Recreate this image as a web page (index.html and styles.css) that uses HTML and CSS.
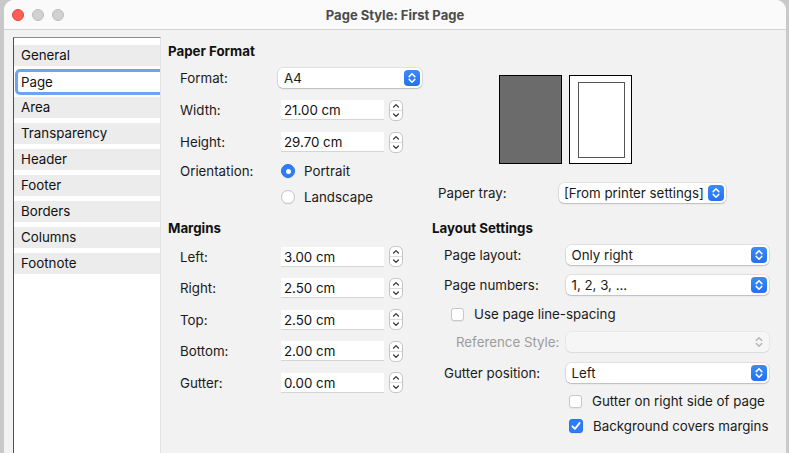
FILE: index.html
```html
<!DOCTYPE html>
<html>
<head>
<meta charset="utf-8">
<title>Page Style: First Page</title>
<link rel="stylesheet" href="styles.css">
</head>
<body>
<div class="window">
  <div class="titlebar">
    <div class="lights"><span class="light red"></span><span class="light"></span><span class="light"></span></div>
    <div class="title">Page Style: First Page</div>
    <div></div>
  </div>
  <div class="main">
    <ul class="tabs">
      <li>General</li>
      <li class="sel">Page</li>
      <li>Area</li>
      <li>Transparency</li>
      <li>Header</li>
      <li>Footer</li>
      <li>Borders</li>
      <li>Columns</li>
      <li>Footnote</li>
    </ul>
    <div class="panel">
      <div class="section top">
        <div class="group left">
          <h2>Paper Format</h2>
          <div class="row r-format"><span class="lbl">Format:</span>
            <div class="select sel-format"><span class="val">A4</span><span class="sbtn"><svg width="16" height="16" viewBox="0 0 16 16"><path d="M5.2 6.6 L8 3.8 L10.8 6.6 M5.2 9.4 L8 12.2 L10.8 9.4" fill="none" stroke="#fff" stroke-width="1.5" stroke-linecap="round" stroke-linejoin="round"/></svg></span></div>
          </div>
          <div class="row r-num"><span class="lbl">Width:</span>
            <span class="input">21.00 cm</span>
            <svg class="spin" width="14" height="21" viewBox="0 0 14 21"><rect x="0.5" y="0.5" width="13" height="20" rx="5" fill="#fff" stroke="#c2c2c2"/><line x1="1" y1="10.5" x2="13" y2="10.5" stroke="#dcdcdc"/><path d="M4.6 7 L7 4.6 L9.4 7 M4.6 14 L7 16.4 L9.4 14" fill="none" stroke="#3a3a3a" stroke-width="1.3" stroke-linecap="round" stroke-linejoin="round"/></svg>
          </div>
          <div class="row r-num"><span class="lbl">Height:</span>
            <span class="input">29.70 cm</span>
            <svg class="spin" width="14" height="21" viewBox="0 0 14 21"><rect x="0.5" y="0.5" width="13" height="20" rx="5" fill="#fff" stroke="#c2c2c2"/><line x1="1" y1="10.5" x2="13" y2="10.5" stroke="#dcdcdc"/><path d="M4.6 7 L7 4.6 L9.4 7 M4.6 14 L7 16.4 L9.4 14" fill="none" stroke="#3a3a3a" stroke-width="1.3" stroke-linecap="round" stroke-linejoin="round"/></svg>
          </div>
          <div class="row r-orient"><span class="lbl">Orientation:</span>
            <span class="radio on"></span><span class="rtext">Portrait</span>
          </div>
          <div class="row r-land"><span class="lbl"></span>
            <span class="radio"></span><span class="rtext">Landscape</span>
          </div>
        </div>
        <div class="group right">
          <div class="preview">
            <div class="pg dark"></div>
            <div class="pg white"><div class="inner"></div></div>
          </div>
          <div class="row r-tray"><span class="lbl">Paper tray:</span>
            <div class="select sel-tray"><span class="val">[From printer settings]</span><span class="sbtn"><svg width="16" height="16" viewBox="0 0 16 16"><path d="M5.2 6.6 L8 3.8 L10.8 6.6 M5.2 9.4 L8 12.2 L10.8 9.4" fill="none" stroke="#fff" stroke-width="1.5" stroke-linecap="round" stroke-linejoin="round"/></svg></span></div>
          </div>
        </div>
      </div>
      <div class="section bottom">
        <div class="group left">
          <h2>Margins</h2>
          <div class="mrows">
            <div class="row r-m"><span class="lbl">Left:</span><span class="input">3.00 cm</span>
              <svg class="spin" width="14" height="21" viewBox="0 0 14 21"><rect x="0.5" y="0.5" width="13" height="20" rx="5" fill="#fff" stroke="#c2c2c2"/><line x1="1" y1="10.5" x2="13" y2="10.5" stroke="#dcdcdc"/><path d="M4.6 7 L7 4.6 L9.4 7 M4.6 14 L7 16.4 L9.4 14" fill="none" stroke="#3a3a3a" stroke-width="1.3" stroke-linecap="round" stroke-linejoin="round"/></svg></div>
            <div class="row r-m"><span class="lbl">Right:</span><span class="input">2.50 cm</span>
              <svg class="spin" width="14" height="21" viewBox="0 0 14 21"><rect x="0.5" y="0.5" width="13" height="20" rx="5" fill="#fff" stroke="#c2c2c2"/><line x1="1" y1="10.5" x2="13" y2="10.5" stroke="#dcdcdc"/><path d="M4.6 7 L7 4.6 L9.4 7 M4.6 14 L7 16.4 L9.4 14" fill="none" stroke="#3a3a3a" stroke-width="1.3" stroke-linecap="round" stroke-linejoin="round"/></svg></div>
            <div class="row r-m"><span class="lbl">Top:</span><span class="input">2.50 cm</span>
              <svg class="spin" width="14" height="21" viewBox="0 0 14 21"><rect x="0.5" y="0.5" width="13" height="20" rx="5" fill="#fff" stroke="#c2c2c2"/><line x1="1" y1="10.5" x2="13" y2="10.5" stroke="#dcdcdc"/><path d="M4.6 7 L7 4.6 L9.4 7 M4.6 14 L7 16.4 L9.4 14" fill="none" stroke="#3a3a3a" stroke-width="1.3" stroke-linecap="round" stroke-linejoin="round"/></svg></div>
            <div class="row r-m"><span class="lbl">Bottom:</span><span class="input">2.00 cm</span>
              <svg class="spin" width="14" height="21" viewBox="0 0 14 21"><rect x="0.5" y="0.5" width="13" height="20" rx="5" fill="#fff" stroke="#c2c2c2"/><line x1="1" y1="10.5" x2="13" y2="10.5" stroke="#dcdcdc"/><path d="M4.6 7 L7 4.6 L9.4 7 M4.6 14 L7 16.4 L9.4 14" fill="none" stroke="#3a3a3a" stroke-width="1.3" stroke-linecap="round" stroke-linejoin="round"/></svg></div>
            <div class="row r-m"><span class="lbl">Gutter:</span><span class="input">0.00 cm</span>
              <svg class="spin" width="14" height="21" viewBox="0 0 14 21"><rect x="0.5" y="0.5" width="13" height="20" rx="5" fill="#fff" stroke="#c2c2c2"/><line x1="1" y1="10.5" x2="13" y2="10.5" stroke="#dcdcdc"/><path d="M4.6 7 L7 4.6 L9.4 7 M4.6 14 L7 16.4 L9.4 14" fill="none" stroke="#3a3a3a" stroke-width="1.3" stroke-linecap="round" stroke-linejoin="round"/></svg></div>
          </div>
        </div>
        <div class="group right layout">
          <h2>Layout Settings</h2>
          <div class="row l1"><span class="lbl2">Page layout:</span>
            <div class="select sel-wide"><span class="val">Only right</span><span class="sbtn"><svg width="16" height="16" viewBox="0 0 16 16"><path d="M5.2 6.6 L8 3.8 L10.8 6.6 M5.2 9.4 L8 12.2 L10.8 9.4" fill="none" stroke="#fff" stroke-width="1.5" stroke-linecap="round" stroke-linejoin="round"/></svg></span></div>
          </div>
          <div class="row l2"><span class="lbl2">Page numbers:</span>
            <div class="select sel-wide"><span class="val">1, 2, 3, ...</span><span class="sbtn"><svg width="16" height="16" viewBox="0 0 16 16"><path d="M5.2 6.6 L8 3.8 L10.8 6.6 M5.2 9.4 L8 12.2 L10.8 9.4" fill="none" stroke="#fff" stroke-width="1.5" stroke-linecap="round" stroke-linejoin="round"/></svg></span></div>
          </div>
          <div class="row l3"><span class="check"></span><span class="ctext">Use page line-spacing</span></div>
          <div class="row l4"><span class="lbl3">Reference Style:</span>
            <div class="select sel-wide disabled"><span class="val"></span><span class="sbtn"><svg width="16" height="16" viewBox="0 0 16 16"><path d="M5.2 6.6 L8 3.8 L10.8 6.6 M5.2 9.4 L8 12.2 L10.8 9.4" fill="none" stroke="#b5b5b5" stroke-width="1.4" stroke-linecap="round" stroke-linejoin="round"/></svg></span></div>
          </div>
          <div class="row l5"><span class="lbl2">Gutter position:</span>
            <div class="select sel-wide"><span class="val">Left</span><span class="sbtn"><svg width="16" height="16" viewBox="0 0 16 16"><path d="M5.2 6.6 L8 3.8 L10.8 6.6 M5.2 9.4 L8 12.2 L10.8 9.4" fill="none" stroke="#fff" stroke-width="1.5" stroke-linecap="round" stroke-linejoin="round"/></svg></span></div>
          </div>
          <div class="row l6"><span class="check"></span><span class="ctext">Gutter on right side of page</span></div>
          <div class="row l7"><span class="check on"><svg width="14" height="14" viewBox="0 0 14 14"><path d="M3.4 7.3 L6 9.9 L10.7 3.9" fill="none" stroke="#fff" stroke-width="1.8" stroke-linecap="round" stroke-linejoin="round"/></svg></span><span class="ctext">Background covers margins</span></div>
        </div>
      </div>
    </div>
  </div>
</div>
</body>
</html>
```
FILE: styles.css
```css
* { box-sizing: border-box; }
html, body { margin: 0; padding: 0; }
body {
  background: #c9c9c9;
  font-family: "Inter", "Liberation Sans", sans-serif;
  font-size: 13.3px;
  color: #1a1a1a;
  width: 789px;
  height: 453px;
  overflow: hidden;
}
.window {
  margin-left: 4px;
  width: 782px;
  height: 453px;
  background: #f2f2f2;
  border-radius: 10px 10px 0 0;
  overflow: hidden;
}
.titlebar {
  height: 30px;
  background: #fafafa;
  border-bottom: 1px solid #d3d3d3;
  display: grid;
  grid-template-columns: 1fr auto 1fr;
  align-items: center;
}
.lights { display: flex; gap: 8px; padding-left: 8px; }
.light {
  width: 12px; height: 12px; border-radius: 50%;
  background: #d1d1d1; border: 0.5px solid #bdbdbd;
}
.light.red { background: #fe5f57; border-color: #e2463f; }
.title { font-weight: 700; color: #4b4b4b; font-size: 13px; }

.main { display: flex; height: 423px; }
.tabs {
  list-style: none; margin: 7px 0 0 9px; padding: 7px 0 0 0;
  width: 148px;
  background: #fff;
  border-left: 1px solid #4e4e4e;
  border-top: 1px solid #8c8c8c;
  border-right: 1px solid #e3e3e3;
  overflow: hidden;
}
.tabs li {
  height: 21px; line-height: 21px;
  padding-left: 7px;
  margin-bottom: 5px;
  background: #ececec;
  color: #111;
}
.tabs li.sel {
  background: #fff;
  height: 26px; line-height: 26px;
  margin: -2px -8px 2px 1px;
  padding-left: 6px;
  border-radius: 5px;
  box-shadow: inset 0 0 0 3px #70a2f3;
}

.panel { flex: 1; margin-left: 7px; padding-top: 10px; }
.section { display: flex; }
.group.left { width: 264px; }
.group.right { flex: 1; }
h2 { margin: 0; height: 22px; line-height: 22px; font-size: 13.3px; font-weight: 700; color: #111; }

.row { display: flex; align-items: center; }
.lbl { width: 98px; flex: none; }
.left .row { padding-left: 12px; }
.r-format { height: 32px; }
.r-num { height: 32px; }
.r-orient { height: 26px; }
.r-land { height: 25px; }
.input {
  width: 103px; height: 20px; line-height: 20px;
  background: #fff;
  border-bottom: 1px solid #d4d4d4;
  padding-left: 3px;
  margin-left: 3px;
  color: #111;
}
.spin { margin-left: 5px; flex: none; }
.radio {
  width: 14px; height: 14px; border-radius: 50%;
  margin-left: 3px;
  background: #fff;
  border: 1px solid #c6c6c6;
  box-shadow: 0 0.5px 1px rgba(0,0,0,0.08);
  flex: none;
}
.radio.on {
  background: #2c7df6;
  border-color: #2a74e6;
  display: flex; align-items: center; justify-content: center;
}
.radio.on::after { content: ""; width: 5px; height: 5px; border-radius: 50%; background: #fff; }
.rtext { margin-left: 9px; }

.select {
  height: 20px; background: #fff;
  border-radius: 5px;
  box-shadow: 0 0 0 0.5px rgba(0,0,0,0.14), 0 1px 1.5px rgba(0,0,0,0.16);
  display: flex; align-items: center; justify-content: space-between;
  padding: 0 2px 0 6px;
}
.sbtn {
  width: 16px; height: 16px; border-radius: 4px;
  background: linear-gradient(#3b8bf8, #2470f1);
  display: flex;
}
.sel-format { width: 144px; }
.sel-tray { width: 167px; padding-left: 5px; }
.sel-wide { width: 203px; }
.select.disabled { background: #f6f6f6; box-shadow: 0 0 0 0.5px rgba(0,0,0,0.08), 0 1px 1px rgba(0,0,0,0.06); }
.select.disabled .sbtn { background: none; }

.preview { display: flex; gap: 7px; margin: 35px 0 0 67px; }
.pg { width: 63px; height: 89px; border: 1px solid #000; }
.pg.dark { background: #6b6b6b; }
.pg.white { background: #fff; padding: 6px 6px 5px 8px; display: flex; }
.pg .inner { flex: 1; border: 1px solid #555; }
.r-tray { margin-top: 19px; height: 20px; padding-left: 6px; }
.r-tray .lbl { width: 121px; }

.section.bottom h2 { margin-top: 8px; }
.mrows { margin-top: 2px; }
.r-m { height: 31.5px; }
.r-m .lbl { width: 98px; }

.layout .row { padding-left: 12px; }
.lbl2 { width: 121.5px; flex: none; }
.lbl3 { width: 109.5px; flex: none; margin-left: 12px; color: #9c9c9c; }
.l1 { height: 32px; }
.l2 { height: 28px; }
.l3 { height: 30px; }
.l4 { height: 26px; }
.l5 { height: 35px; }
.layout .l6 { height: 22px; padding-left: 137px; }
.layout .l7 { height: 28px; padding-left: 137px; }
.check {
  width: 13px; height: 13px; border-radius: 3px;
  background: #fff; border: 1px solid #c8c8c8;
  box-shadow: 0 0.5px 1px rgba(0,0,0,0.06);
  margin-left: 7px; flex: none; display: flex;
}
.check.on { background: #2c7df6; border-color: #2a74e6; width: 14px; height: 14px; }
.check.on svg { margin: -1px; }
.ctext { margin-left: 10px; }
.l6 .check, .l7 .check { margin-left: 0; }
```
